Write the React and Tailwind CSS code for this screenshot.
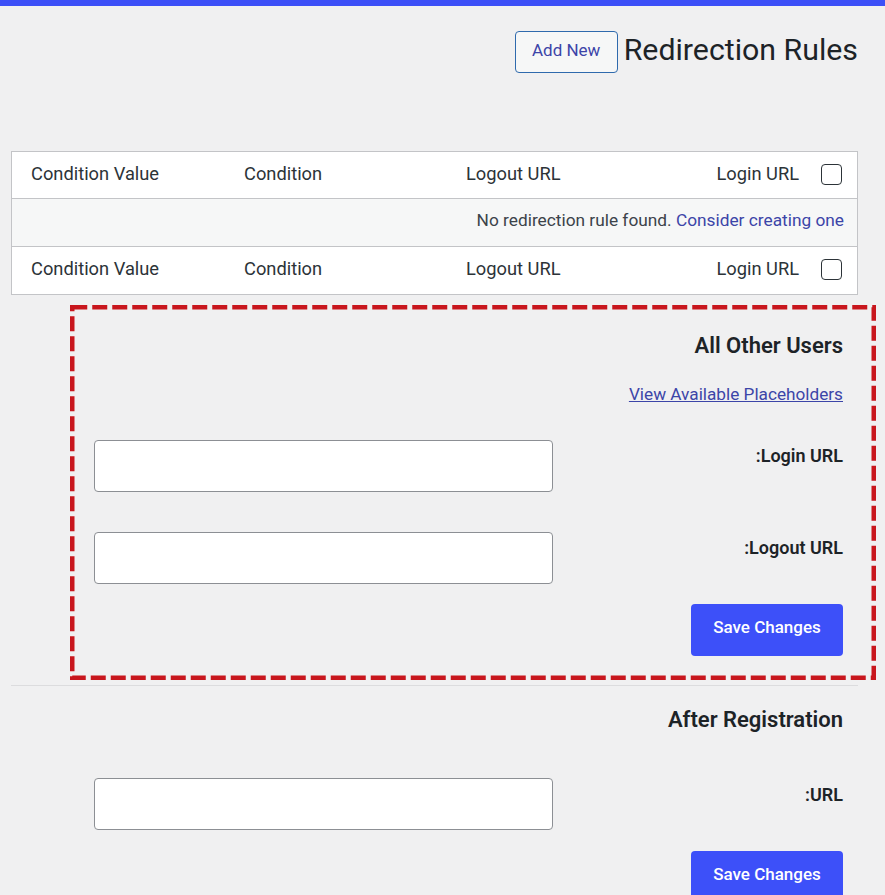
const columns = [
  { label: "Condition Value", cls: "w-[232px] pl-[19px]" },
  { label: "Condition", cls: "w-[222px]" },
];

function HeaderRow({ bottom }) {
  return (
    <div
      className={
        "flex items-center h-[47px] bg-white text-[18.3px] text-[#2c3338] pb-[3px] " +
        (bottom ? "" : "border-b border-[#c3c4c7]")
      }
    >
      {columns.map((c) => (
        <div key={c.label} className={c.cls}>
          {c.label}
        </div>
      ))}
      <div className="flex-1 flex justify-between">
        <span>Logout URL</span>
        <span>Login URL</span>
      </div>
      <div className="w-[58px] flex justify-start pl-[22px] pt-[1px]">
        <span className="block w-[21px] h-[21px] rounded-[4px] border-[1.5px] border-[#2c3338] bg-white" />
      </div>
    </div>
  );
}

function UrlField({ label, labelPad = "pt-[6px]" }) {
  return (
    <div className="flex justify-between items-start pl-[83px] pr-[15px]">
      <input
        type="text"
        className="w-[459px] h-[52px] bg-white border border-[#8c8f94] rounded-[4px] outline-none px-2"
      />
      <label className={"text-[18px] leading-[20px] font-semibold text-[#1d2327] " + labelPad}>
        {label}
      </label>
    </div>
  );
}

function SaveButton({ className = "" }) {
  return (
    <div className={"flex justify-end pr-[15px] " + className}>
      <button className="w-[152px] h-[52px] pb-[4px] rounded-[4px] bg-[#3d50f9] text-white text-[17px] font-medium">
        Save Changes
      </button>
    </div>
  );
}

export default function App() {
  return (
    <div className="min-h-[895px] bg-[#f0f0f1] font-['Roboto','Liberation_Sans',sans-serif] text-[#1d2327] overflow-hidden">
      <div className="h-[6px] bg-[#3c4ff7]" />

      <div className="pl-[11px] pr-[27px]">
        <div className="flex justify-end items-center gap-[6px] pt-[25px]">
          <button className="w-[103px] h-[42px] pb-[3px] border border-[#2f6aad] rounded-[4px] text-[17px] text-[#3c44a8] bg-[#f6f7f7]">
            Add New
          </button>
          <h1 className="text-[30.3px] leading-none text-[#1d2327] pb-[3px]">
            Redirection Rules
          </h1>
        </div>

        {/* rules table */}
        <div className="mt-[78px] border border-[#c3c4c7]">
          <HeaderRow />
          <div className="h-[48px] bg-[#f6f7f7] border-b border-[#c3c4c7] flex items-center justify-end pr-[13px] pb-[3px] text-[17.3px] text-[#3c434a]">
            No redirection rule found.&nbsp;
            <a href="#" className="text-[#3c45a8]">
              Consider creating one
            </a>
          </div>
          <HeaderRow bottom />
        </div>

        {/* all other users */}
        <div className="relative mt-[10px] h-[380px] pt-[29px]">
          <svg
            className="absolute top-0 left-[59px] w-[806px] h-[375px] pointer-events-none"
            viewBox="0 0 806 375"
          >
            <rect
              x="2.25"
              y="2.25"
              width="801.5"
              height="370.5"
              fill="none"
              stroke="#c8161d"
              strokeWidth="4.5"
              strokeDasharray="15 5"
            />
          </svg>
          <h2 className="text-right pr-[15px] text-[22px] leading-[24px] font-semibold text-[#1d2327]">
            All Other Users
          </h2>
          <div className="text-right pr-[15px] mt-[26px] leading-[20px]">
            <a href="#" className="text-[17.2px] text-[#3c45a8] underline">
              View Available Placeholders
            </a>
          </div>
          <div className="mt-[35px]">
            <UrlField label=":Login URL" />
          </div>
          <div className="mt-[40px]">
            <UrlField label=":Logout URL" />
          </div>
          <SaveButton className="mt-[20px]" />
        </div>

        <div className="border-t border-[#dcdcde]" />

        {/* after registration */}
        <h2 className="mt-[22px] text-right pr-[15px] text-[22px] leading-[24px] font-semibold text-[#1d2327]">
          After Registration
        </h2>
        <div className="mt-[46px]">
          <UrlField label=":URL" labelPad="pt-[7px]" />
        </div>
        <SaveButton className="mt-[21px]" />
      </div>
    </div>
  );
}
